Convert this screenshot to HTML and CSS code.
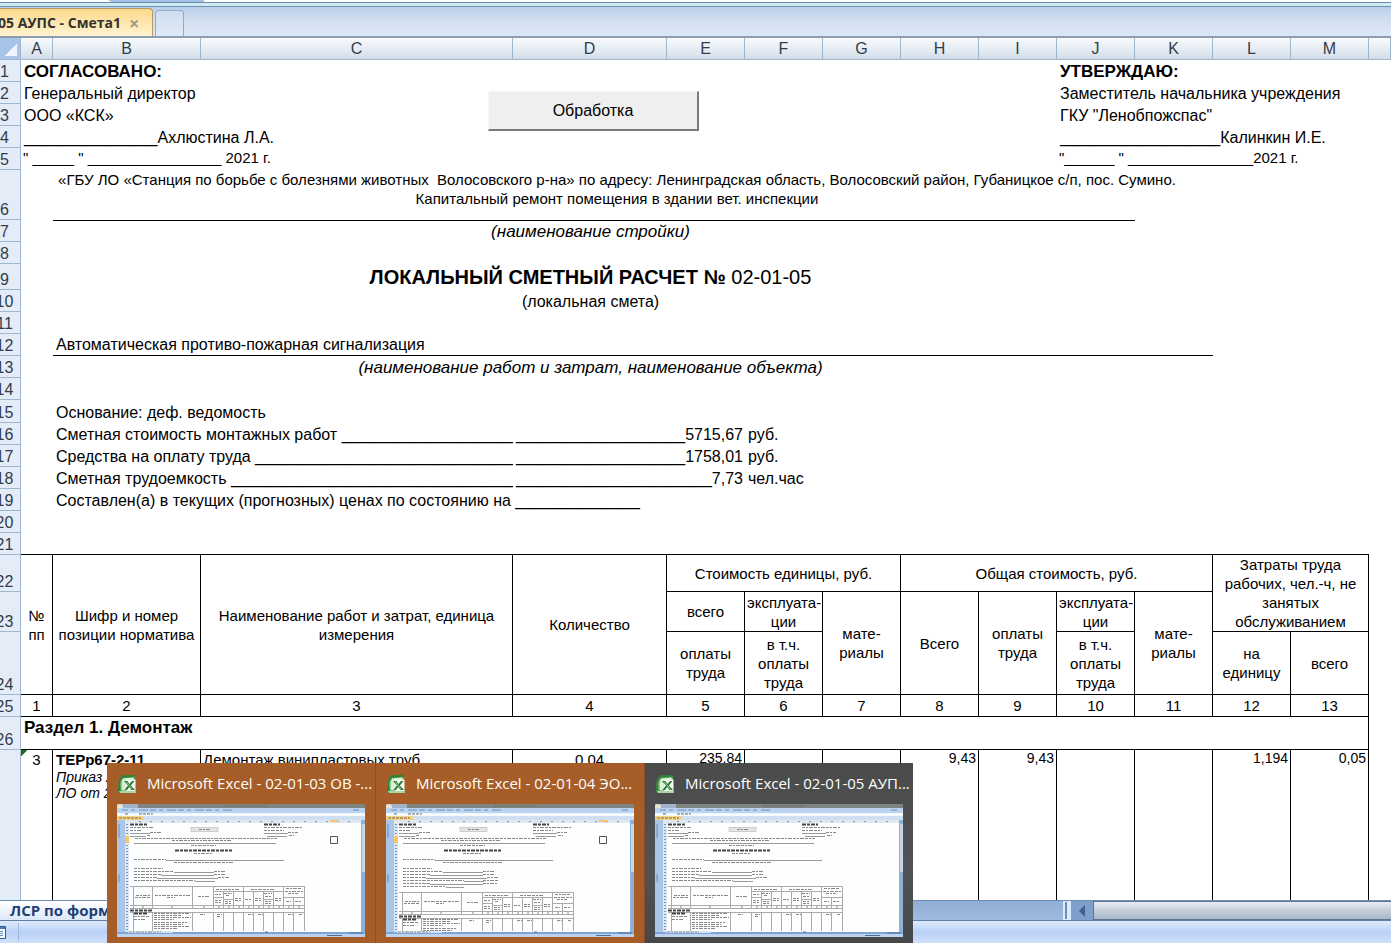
FILE: index.html
```html
<!DOCTYPE html>
<html lang="ru">
<head>
<meta charset="utf-8">
<title>Microsoft Excel - 02-01-05 АУПС - Смета1</title>
<link rel="stylesheet" href="styles.css">
</head>
<body>
<svg class="defs" aria-hidden="true">
  <defs>
    <linearGradient id="leaf" x1="0" y1="0" x2="0" y2="1"><stop offset="0" stop-color="#3f8f45"/><stop offset=".5" stop-color="#8ccb86"/><stop offset="1" stop-color="#2c7a35"/></linearGradient>
    <symbol id="excel" viewBox="0 0 20 20">
      <path d="M5 1.500 17 1l1 2v13l1 3H2l-1-2L2 6z" fill="url(#leaf)"/>
      <path d="M5 1.500 17 1l.500 1.500L6 3.500 3.500 7 3 16l-2 1L2 6z" fill="#2f7d38"/>
      <path d="M6 4.500 16.500 3.500l.500 13H4.500L5 7z" fill="#d9f0d3"/>
      <path d="M9 5.500h9.500v12H9z" fill="#f4faf2"/>
      <path d="M2 17h16.500l.500 2H3z" fill="#a9d7a2"/>
      <path d="M7 7h3.500l2 3 2.500-3h2.500l-3.700 4.500L18 16h-3.500l-2.300-3-2.200 3H7.500l3.500-4.500z" fill="#267334"/>
      <path d="M8.500 7.800h1.500l5.800 7.400h-1.200z" fill="#7cc178"/>
    </symbol>
    <symbol id="thumb-frame" viewBox="0 0 248 133">
      <rect width="248" height="133" fill="#fdfefe"/>
      <rect width="248" height="4" fill="#7e8580"/><rect width="21" height="4" fill="#9fb4c8"/>
      <circle cx="3" cy="3" r="3" fill="#e9e3d2"/>
      <path class="t-dim" d="M108 2h42"/>
      <rect y="4" width="248" height="5" fill="#bcd3f0"/>
      <path class="t-blue" d="M5 6h110M236 6h8"/>
      <rect y="9" width="248" height="3" fill="#f6fafd"/>
      <path class="t-dim" d="M8 10h3M22 10h14"/>
      <rect y="12" width="248" height="4" fill="#cfdff2"/>
      <rect y="12" width="27" height="4" fill="#f6d383"/><path class="t-dim" d="M2 14h22"/>
      <rect y="16" width="248" height="3" fill="#dfe8f2"/>
      <path class="t-cols" d="M22 17.5h220"/>
      <rect y="16" width="8" height="113" fill="#a9c6e8"/><rect x="8" y="18" width="4" height="110" fill="#dce8f6"/>
      <path class="t-rows" d="M10 20v107"/>
      <path d="M2 20v14M2 70v8" stroke="#6f8db5"/>
      <rect x="244" y="16" width="4" height="114" fill="#8fb0d8"/><rect x="245" y="20" width="3" height="48" fill="#c7d5e6"/>
      <rect y="128" width="248" height="2" fill="#7fa3d2"/><rect y="130" width="248" height="3" fill="#bcd2f0"/>
      <rect x="11" y="127" width="45" height="2" fill="#d5e5f8"/><path class="t-text" d="M12 128h32"/>
      <path d="M148 128h3M232 129h14M210 131.5h15" stroke="#49709f"/>
      <path class="t-bold" d="M13 20.5h17M147 20.5h16"/>
      <path class="t-text" d="M13 23.5h23M13 26.5h11M33 28.5h11M147 23.5h38M147 26.5h20M171 28.5h10M30 31.5h4M172 31.5h5"/>
      <path class="t-rule" d="M13 29.5h20M147 29.5h24M13 32.5h16M150 32.5h20"/>
      <rect x="74" y="23.5" width="27" height="4" fill="#e3e4e5" stroke="#aaa" stroke-width=".5"/><path class="t-text" d="M82 25.5h11"/>
      <path class="t-text" d="M18 34.5h142M55 36.5h60M74 41.5h25"/>
      <path class="t-rule" d="M17 39.5h142"/>
      <path class="t-bold" d="M58 46.5h57"/><path class="t-text" d="M77 49.5h19M57 58.5h59M17 55.5h32"/>
      <path class="t-rule" d="M49 56.5h118"/>
      <path class="t-text" d="M17 64.5h29M17 67.5h40M17 70.5h27M17 73.5h23M17 76.5h61M97 67.5h12M97 70.5h12M101 73.5h12"/>
      <path class="t-rule" d="M57 68.5h40M44 71.5h53M40 74.5h61M78 77.5h20"/>
    </symbol>
    <symbol id="thumb-table" viewBox="0 0 248 133">
      <path class="t-grid" d="M13 82.5h174M96 87.5h70M96 93.5h10M106 95.5h10M146 95.5h10M166 93.5h21M13 101.5h174M13 104.5h174M13 108.5h174M16.5 82v22M16.5 108v19M35.5 82v22M35.5 108v19M75.5 82v22M75.5 108v19M96.5 82v22M96.5 108v19M106.5 87v17M106.5 108v19M116.5 87v17M116.5 108v19M126.5 82v22M126.5 108v19M136.5 87v17M136.5 108v19M146.5 87v17M146.5 108v19M156.5 87v17M156.5 108v19M166.5 82v22M166.5 108v19M176.5 93v11M176.5 108v19M187.5 82v45"/>
      <path class="t-text" d="M19 91.5h14M18 93.5h16M38 91.5h35M50 93.5h8M81 92.5h11M99 85.5h24M134 85.5h24M169 84.5h16M168 87.5h18M171 89.5h10M98 90.5h6M107 89.5h8M109 91.5h4M98 96.5h7M98 98.5h6M108 97.5h6M108 99.5h6M118 94.5h7M118 96.5h6M128 95.5h6M138 94.5h7M138 96.5h6M147 89.5h8M148 92.5h6M148 97.5h6M148 99.5h6M158 94.5h7M158 96.5h6M169 97.5h5M178 97.5h6M25 103h2M54 103h2M86 103h2M101 103h2M111 103h2M121 103h2M131 103h2M141 103h2M151 103h2M161 103h2M171 103h2M181 103h2"/>
      <path class="t-bold" d="M13 106.5h23M17 109.5h14"/>
      <path class="t-text" d="M17 112.5h15M17 115.5h12M37 109.5h35M37 111.5h28M37 113.5h37M37 115.5h20M37 118.5h33M37 120.5h29M37 122.5h36M37 124.5h24M83 110.5h5M100 110.5h5M100 112.5h4M131 110.5h5M141 110.5h5M171 110.5h5M182 110.5h4"/>
    </symbol>
  </defs>
</svg>

<div class="app">
  <div class="ribbon-edge"><div class="name-box"></div></div>
  <nav class="doc-tabs">
    <div class="doc-tab">05 АУПС - Смета1 <button class="doc-close" aria-label="Закрыть">×</button></div>
    <button class="doc-new" aria-label="Новая вкладка"></button>
  </nav>

  <main class="sheet">
    <table class="grid">
      <colgroup><col class="w-head"><col class="w-a"><col class="w-b"><col class="w-c"><col class="w-d"><col class="w-n" span="9"><col></colgroup>
      <thead>
        <tr class="letters"><th class="corner"></th><th>A</th><th>B</th><th>C</th><th>D</th><th>E</th><th>F</th><th>G</th><th>H</th><th>I</th><th>J</th><th>K</th><th>L</th><th>M</th><th></th></tr>
      </thead>
      <tbody>
        <tr><th>1</th><td colspan="9" class="bold">СОГЛАСОВАНО:</td><td colspan="5" class="bold">УТВЕРЖДАЮ:</td></tr>
        <tr><th>2</th><td colspan="9">Генеральный директор</td><td colspan="5">Заместитель начальника учреждения</td></tr>
        <tr><th>3</th><td colspan="9">ООО «КСК»</td><td colspan="5">ГКУ "Ленобпожспас"</td></tr>
        <tr><th>4</th><td colspan="9">_______________Ахлюстина Л.А.</td><td colspan="5">__________________Калинкин И.Е.</td></tr>
        <tr><th>5</th><td colspan="9" class="small date">" _____ " ________________ 2021 г.</td><td colspan="5" class="small date">"______ " _______________2021 г.</td></tr>
        <tr class="h50"><th>6</th><td colspan="11" class="small center top">«ГБУ ЛО «Станция по борьбе с болезнями животных&nbsp; Волосовского р-на» по адресу: Ленинградская область, Волосовский район, Губаницкое с/п, пос. Сумино.<br>Капитальный ремонт помещения в здании вет. инспекции</td><td colspan="3"></td></tr>
        <tr><th>7</th><td></td><td colspan="9" class="mid italic line-top">(наименование стройки)</td><td colspan="4"></td></tr>
        <tr><th>8</th><td colspan="14"></td></tr>
        <tr class="h26"><th>9</th><td></td><td colspan="9" class="mid title"><b>ЛОКАЛЬНЫЙ СМЕТНЫЙ РАСЧЕТ №</b> 02-01-05</td><td colspan="4"></td></tr>
        <tr><th>10</th><td></td><td colspan="9" class="mid">(локальная смета)</td><td colspan="4"></td></tr>
        <tr><th>11</th><td colspan="14"></td></tr>
        <tr><th>12</th><td></td><td colspan="10" class="line-bottom">Автоматическая противо-пожарная сигнализация</td><td colspan="3"></td></tr>
        <tr><th>13</th><td></td><td colspan="9" class="mid italic">(наименование работ и затрат, наименование объекта)</td><td colspan="4"></td></tr>
        <tr><th>14</th><td colspan="14"></td></tr>
        <tr class="h23"><th>15</th><td></td><td colspan="13">Основание: деф. ведомость</td></tr>
        <tr><th>16</th><td></td><td colspan="2" class="clip">Сметная стоимость монтажных работ ____________________</td><td colspan="2" class="right">___________________5715,67</td><td colspan="9">руб.</td></tr>
        <tr><th>17</th><td></td><td colspan="2" class="clip">Средства на оплату труда _____________________________</td><td colspan="2" class="right">___________________1758,01</td><td colspan="9">руб.</td></tr>
        <tr><th>18</th><td></td><td colspan="2" class="clip">Сметная трудоемкость ________________________________</td><td colspan="2" class="right">______________________7,73</td><td colspan="9">чел.час</td></tr>
        <tr><th>19</th><td></td><td colspan="13">Составлен(а) в текущих (прогнозных) ценах по состоянию на ______________</td></tr>
        <tr><th>20</th><td colspan="14"></td></tr>
        <tr><th>21</th><td colspan="13" class="line-bottom"></td><td></td></tr>
        <tr class="h37 box"><th>22</th><td rowspan="3">№ пп</td><td rowspan="3">Шифр и номер позиции норматива</td><td rowspan="3">Наименование работ и затрат, единица измерения</td><td rowspan="3">Количество</td><td colspan="3">Стоимость единицы, руб.</td><td colspan="4">Общая стоимость, руб.</td><td colspan="2" rowspan="2">Затраты труда рабочих, чел.-ч, не занятых обслуживанием</td></tr>
        <tr class="h40 box"><th>23</th><td>всего</td><td>эксплуата-<br>ции</td><td rowspan="2">мате-<br>риалы</td><td rowspan="2">Всего</td><td rowspan="2">оплаты труда</td><td>эксплуата-<br>ции</td><td rowspan="2">мате-<br>риалы</td></tr>
        <tr class="h63 box"><th>24</th><td>оплаты труда</td><td>в т.ч. оплаты труда</td><td>в т.ч. оплаты труда</td><td>на единицу</td><td>всего</td></tr>
        <tr class="box"><th>25</th><td>1</td><td>2</td><td>3</td><td>4</td><td>5</td><td>6</td><td>7</td><td>8</td><td>9</td><td>10</td><td>11</td><td>12</td><td>13</td></tr>
        <tr class="h33"><th>26</th><td colspan="13" class="bold section">Раздел 1. Демонтаж</td><td></td></tr>
        <tr class="h150 box data"><th></th><td class="flag">3</td><td class="code"><b>ТЕРр67-2-11</b><br><i>Приказ А</i><i>ЛО от 20</i></td><td class="work">Демонтаж винипластовых труб</td><td>0,04</td><td class="num">235,84</td><td></td><td></td><td class="num">9,43</td><td class="num">9,43</td><td></td><td></td><td class="num">1,194</td><td class="num">0,05</td></tr>
      </tbody>
    </table>
    <button class="process">Обработка</button>
  </main>

  <footer>
    <div class="sheet-bar">
      <button class="sheet-tab">ЛСР по форм</button>
      <div class="hscroll"><span class="splitter"></span><button class="arrow" aria-label="Прокрутить влево"><svg viewBox="0 0 6 12"><path d="M6 0v12L0 6z" fill="#3f5f8f"/></svg></button><div class="track"></div></div>
    </div>
    <div class="status"><div class="rec"><svg viewBox="0 0 14 13"><path d="M.5 .5h13v12H.5z" fill="#f4f8fd" stroke="#2f5a96"/><path d="M1 2h12" stroke="#4f7ab4" stroke-width="2"/><path d="M3 5.500h8M3 7.500h8M3 9.500h8" stroke="#6d94c8"/></svg></div></div>
  </footer>
</div>

<aside class="previews">
  <section class="preview">
    <h2><svg><use href="#excel"/></svg><span>Microsoft Excel - 02-01-03 ОВ -...</span></h2>
    <svg class="shot" viewBox="0 0 248 133"><use href="#thumb-frame"/><use href="#thumb-table"/><path d="M8 32h4v7H8zM213 16h8v2h-8z" fill="#f5c56f"/><path d="M213.500 32.500h7v7h-7z" fill="#fff" stroke="#555"/></svg>
  </section>
  <section class="preview">
    <h2><svg><use href="#excel"/></svg><span>Microsoft Excel - 02-01-04 ЭО...</span></h2>
    <svg class="shot" viewBox="0 0 248 133"><use href="#thumb-frame"/><path class="t-text" d="M17 79.500h27M17 82.500h43M97 76.500h16M97 79.500h14"/><path class="t-rule" d="M44 80.500h53M60 83.500h18"/><svg width="248" height="127" viewBox="0 0 248 127"><g transform="translate(0 6)"><use href="#thumb-table" width="248" height="133"/></g></svg><path d="M8 32h4v7H8zM213 16h8v2h-8z" fill="#f5c56f"/><path d="M213.500 32.500h7v7h-7z" fill="#fff" stroke="#555"/></svg>
  </section>
  <section class="preview active">
    <h2><svg><use href="#excel"/></svg><span>Microsoft Excel - 02-01-05 АУП...</span></h2>
    <svg class="shot" viewBox="0 0 248 133"><use href="#thumb-frame"/><use href="#thumb-table"/></svg>
  </section>
</aside>
</body>
</html>
```
FILE: styles.css
```css
* { box-sizing: border-box; }
body { margin: 0; overflow: hidden; font: 16px/20px "Liberation Sans", Arial, sans-serif; color: #000; background: #fff; }
button { margin: 0; padding: 0; border: 0; font: inherit; color: inherit; background: none; }
.defs { position: absolute; width: 0; height: 0; }

/* The window is scrolled a little to the right, so its left edge is cut. */
.app { display: flex; flex-direction: column; height: 100vh; margin-left: -14px; }

.ribbon-edge { flex: none; height: 7px; padding-left: 123px; border-bottom: 1px solid #6b93ad; background: linear-gradient(#fff 2px, #cfeaf3 2px); }
.ribbon-edge::after { content: ""; display: block; height: 1px; margin-left: -123px; background: #6c8fae; }
.name-box { width: 95px; height: 2px; background: #a5c0e6; border-radius: 0 0 0 4px; }

.doc-tabs { flex: none; display: flex; align-items: flex-end; gap: 2px; height: 31px; padding-top: 2px; border-bottom: 2px solid #8d9cb0; background: linear-gradient(#b9cfea, #d3e0f1 50%, #dde8f5); }
.doc-tab { display: flex; align-items: center; gap: 8px; width: 167px; height: 28px; padding-left: 11px; border: 1px solid #b59a62; border-bottom: 0; border-radius: 0 4px 0 0; background: linear-gradient(#fdd98a, #fee9b5 60%, #fff3d0); font: bold 14px/26px "Open Sans", "Noto Sans", sans-serif; color: #333; white-space: nowrap; }
.doc-close { font: bold 18px/20px "Open Sans", sans-serif; color: #a09a8c; }
.doc-new { width: 29px; height: 26px; border: 1px solid #93a9c4; border-bottom: 0; border-radius: 4px 4px 0 0; background: linear-gradient(#cfdff1, #dfeaf6); }

.sheet { position: relative; flex: 1; min-height: 0; overflow: hidden; }
.grid { width: 100%; table-layout: fixed; border-collapse: separate; border-spacing: 0; }
.w-head { width: 35px; } .w-a { width: 32px; } .w-b { width: 148px; } .w-c { width: 312px; } .w-d { width: 154px; } .w-n { width: 78px; }
tr { height: 22px; }
.h23 { height: 23px; } .h26 { height: 26px; } .h33 { height: 33px; } .h37 { height: 37px; } .h40 { height: 40px; } .h50 { height: 50px; } .h63 { height: 63px; } .h150 { height: 160px; }
th { padding: 0 0 0 3px; border-right: 1px solid #9eb6ce; border-bottom: 1px solid #9eb6ce; background: #e4ecf7; color: #333d4a; font-weight: normal; line-height: 19px; vertical-align: bottom; }
.letters th { padding: 0; background: linear-gradient(#f8fafc, #e3eaf2 60%, #d3dce8); line-height: 21px; }
.letters .corner { background: linear-gradient(135deg, transparent 50%, #f0f5fb 50%) 18px 5px / 13px 13px no-repeat, #a9c4e9; }
td { padding: 0 3px; white-space: nowrap; vertical-align: bottom; }
.bold { font-weight: bold; font-size: 17px; }
.italic { font-style: italic; font-size: 17px; }
.center { text-align: center; }
.top { vertical-align: top; }
.small { font-size: 15px; line-height: 19px; }
.date { padding: 0 2px 3px; line-height: 18px; }
.mid { padding-right: 10px; text-align: center; }
.title { font-size: 20px; line-height: 26px; }
.line-top { border-top: 1px solid #000; }
.line-bottom { border-bottom: 1px solid #000; }
.clip { overflow: hidden; }
.right { padding: 0 2px 0 0; text-align: right; }
.box td { padding: 0 2px; border-right: 1px solid #000; border-bottom: 1px solid #000; font-size: 15px; line-height: 19px; text-align: center; vertical-align: middle; white-space: normal; }
.section { border-right: 1px solid #000; border-bottom: 1px solid #000; vertical-align: top; line-height: 22px; }
.data td { vertical-align: top; white-space: nowrap; }
.data .flag { background: linear-gradient(135deg, #1f6b2a 50%, transparent 50%) 0 0 / 6px 6px no-repeat; }
.data .code { padding: 0 3px; text-align: left; }
.code i { display: block; font-size: 14px; line-height: 16px; }
.data .work { text-align: left; }
.data .num { font-size: 14px; line-height: 17px; text-align: right; }

.process { position: absolute; left: 502px; top: 53px; width: 211px; height: 40px; border: solid; border-width: 1px 2px 2px 1px; border-color: #f8f8f8 #7a7a7a #7a7a7a #f8f8f8; background: #efefef; }

footer { flex: none; }
.sheet-bar { display: flex; justify-content: space-between; height: 21px; border-top: 1px solid #6e8fb5; border-bottom: 1px solid #5f7fa6; background: linear-gradient(#90aed6, #9fbbe0); }
.sheet-tab { width: 160px; padding-left: 24px; text-align: left; background: linear-gradient(#fff, #dbe8f8); font: bold 15px/19px "Open Sans", "Noto Sans", sans-serif; color: #1f3f77; }
.hscroll { display: flex; width: 328px; }
.splitter { width: 8px; border: 1px solid #dcebfa; border-width: 1px 4px 1px 2px; background: #6f8fb8; }
.arrow { display: flex; align-items: center; justify-content: center; width: 22px; background: #7f9fca; }
.arrow svg { width: 6px; height: 12px; }
.track { flex: 1; border: 1px solid #5f7592; border-right: 0; background: linear-gradient(#e9eef5, #c3ccd9 50%, #abb8ca); }
.status { height: 22px; padding: 2px 6px; background: linear-gradient(#dfebfb, #c6dafa 35%, #b9d0f5 50%, #cfe0fa); }
.rec { display: flex; align-items: center; width: 27px; height: 18px; border-right: 1px solid #9db9de; }
.rec svg { width: 14px; height: 13px; }

.previews { position: fixed; left: 107px; bottom: 0; display: flex; height: 180px; color: #fff; }
.preview { width: 269px; padding: 10px; background: #a65d27; border-right: 1px solid #8a4e22; }
.preview.active { width: 268px; background: linear-gradient(#4b4b4b, #505254 60%, #454749); border: 0; }
.preview h2 { display: flex; align-items: center; gap: 10px; height: 21px; margin: 0 0 10px; font: 15px/21px "Open Sans", "Noto Sans", sans-serif; white-space: nowrap; }
.preview h2 svg { flex: none; width: 20px; height: 20px; }
.shot { display: block; width: 248px; height: 133px; }

.t-text, .t-bold, .t-dim, .t-blue, .t-cols, .t-rows, .t-rule, .t-grid { fill: none; }
.t-text { stroke: #888; stroke-dasharray: 3 1 2 1 4 1; }
.t-bold { stroke: #444; stroke-width: 2; stroke-dasharray: 4 1 3 1; }
.t-dim { stroke: #6b6b60; stroke-dasharray: 3 1; }
.t-blue { stroke: #6f8fbf; stroke-dasharray: 6 3 4 4 9 2; }
.t-cols { stroke: #8195ad; stroke-dasharray: 2 9; }
.t-rows { stroke: #8195ad; stroke-width: 2; stroke-dasharray: 1 2; }
.t-rule { stroke: #999; stroke-width: 1; }
.t-grid { stroke: #aaa; stroke-width: 1; }
```
